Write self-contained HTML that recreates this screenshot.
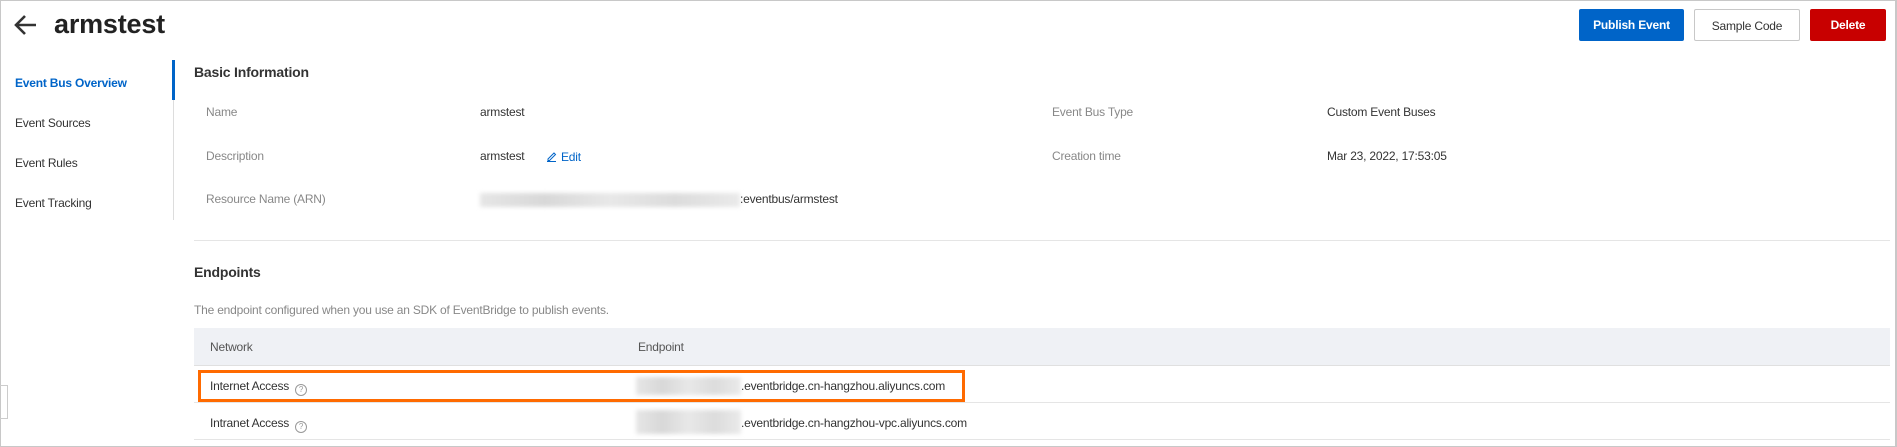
<!DOCTYPE html>
<html><head><meta charset="utf-8"><style>
*{margin:0;padding:0;box-sizing:border-box}
body{width:1897px;height:447px;background:#fff;font-family:"Liberation Sans",Arial,sans-serif;color:#333;position:relative;overflow:hidden;font-size:12px;letter-spacing:-0.2px}
.frame{position:absolute;left:0;top:0;width:1897px;height:447px;border:1px solid #c8c8c8;border-right:2px solid #c8c8c8}
.a{position:absolute;white-space:nowrap}
.btn{position:absolute;top:9px;height:32px;line-height:32px;text-align:center;font-size:12px;border-radius:2px}
.lbl{color:#888}
.q{display:inline-block;vertical-align:-2px;margin-left:6px;width:12px;height:12px;border:1px solid #999;border-radius:50%;font-size:8px;line-height:10px;text-align:center;color:#999;letter-spacing:0}
.blur{position:absolute;background:linear-gradient(90deg,#e6e6e6,#d8d8d8,#e8e8e8,#dcdcdc,#eaeaea);filter:blur(2px)}
</style></head><body>
<div class="frame"></div>
<svg class="a" style="left:14px;top:14px" width="24" height="22" viewBox="0 0 24 22"><path d="M22 11H3M11 2L2 11l9 9" stroke="#333" stroke-width="2.6" fill="none"/></svg>
<div class="a" style="left:54px;top:9px;font-size:27px;font-weight:600;color:#222">armstest</div>
<div class="btn" style="left:1579px;width:105px;background:#0064c8;color:#fff;font-weight:600">Publish Event</div>
<div class="btn" style="left:1694px;width:106px;border:1px solid #c8c8c8;color:#333">Sample Code</div>
<div class="btn" style="left:1810px;width:76px;background:#c80000;color:#fff;font-weight:600">Delete</div>

<div class="a" style="left:173px;top:60px;width:1px;height:160px;background:#ddd"></div>
<div class="a" style="left:172px;top:60px;width:3px;height:40px;background:#0064c8"></div>
<div class="a" style="left:15px;top:76px;color:#0064c8;font-weight:600">Event Bus Overview</div>
<div class="a" style="left:15px;top:116px">Event Sources</div>
<div class="a" style="left:15px;top:156px">Event Rules</div>
<div class="a" style="left:15px;top:196px">Event Tracking</div>

<div class="a" style="left:194px;top:64px;font-size:14px;font-weight:600">Basic Information</div>
<div class="a lbl" style="left:206px;top:105px">Name</div>
<div class="a" style="left:480px;top:105px">armstest</div>
<div class="a lbl" style="left:206px;top:149px">Description</div>
<div class="a" style="left:480px;top:149px">armstest</div>
<svg class="a" style="left:546px;top:151px" width="11" height="11" viewBox="0 0 11 11"><path d="M2 8L8 2l1.5 1.5-6 6H2zM1 10.5h9" stroke="#0064c8" fill="none"/></svg>
<div class="a" style="left:561px;top:150px;color:#0064c8">Edit</div>
<div class="a lbl" style="left:206px;top:192px">Resource Name (ARN)</div>
<div class="blur" style="left:480px;top:193px;width:260px;height:14px"></div>
<div class="a" style="left:740px;top:192px">:eventbus/armstest</div>
<div class="a lbl" style="left:1052px;top:105px">Event Bus Type</div>
<div class="a" style="left:1327px;top:105px">Custom Event Buses</div>
<div class="a lbl" style="left:1052px;top:149px">Creation time</div>
<div class="a" style="left:1327px;top:149px">Mar 23, 2022, 17:53:05</div>

<div class="a" style="left:194px;top:240px;width:1696px;height:1px;background:#e5e5e5"></div>
<div class="a" style="left:194px;top:264px;font-size:14px;font-weight:600">Endpoints</div>
<div class="a lbl" style="left:194px;top:303px">The endpoint configured when you use an SDK of EventBridge to publish events.</div>
<div class="a" style="left:194px;top:328px;width:1696px;height:38px;background:#eff1f5;border-bottom:1px solid #e0e0e0"></div>
<div class="a" style="left:210px;top:340px;color:#555">Network</div>
<div class="a" style="left:638px;top:340px;color:#555">Endpoint</div>
<div class="a" style="left:194px;top:402px;width:1696px;height:1px;background:#e5e5e5"></div>
<div class="a" style="left:194px;top:439px;width:1696px;height:1px;background:#e5e5e5"></div>
<div class="a" style="left:198px;top:370px;width:767px;height:32px;border:3px solid #ff6a00"></div>
<div class="a" style="left:210px;top:379px">Internet Access<span class="q">?</span></div>
<div class="blur" style="left:636px;top:377px;width:105px;height:18px"></div>
<div class="a" style="left:741px;top:379px">.eventbridge.cn-hangzhou.aliyuncs.com</div>
<div class="a" style="left:210px;top:416px">Intranet Access<span class="q">?</span></div>
<div class="blur" style="left:636px;top:410px;width:105px;height:24px"></div>
<div class="a" style="left:741px;top:416px">.eventbridge.cn-hangzhou-vpc.aliyuncs.com</div>
<div class="a" style="left:0;top:385px;width:8px;height:34px;border:1px solid #ccc;border-left:none"></div>
</body></html>
